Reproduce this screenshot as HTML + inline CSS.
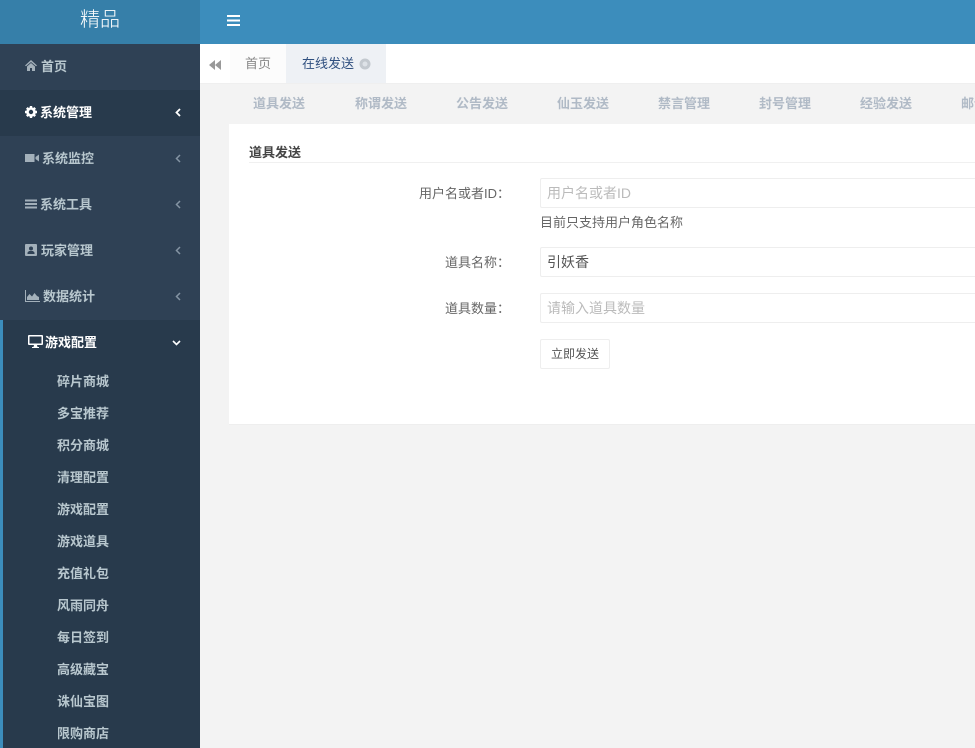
<!DOCTYPE html>
<html lang="zh">
<head>
<meta charset="utf-8">
<title>在线发送</title>
<style>
html,body{margin:0;padding:0;width:975px;height:748px;overflow:hidden;background:#f3f3f3;}
body{position:relative;font-family:"Liberation Sans","Noto Sans CJK SC",sans-serif;font-size:14px;color:#666;}
.a{position:absolute;white-space:nowrap;}
#logo{left:0;top:0;width:200px;height:44px;background:#367fa9;color:#fff;font-size:20px;line-height:40px;text-align:center;font-weight:300;}
#top{left:200px;top:0;width:775px;height:44px;background:#3c8dbc;}
#side{left:0;top:44px;width:200px;height:704px;background:#2f4155;overflow:hidden;}
.it{position:absolute;left:0;width:200px;height:46px;line-height:46px;color:#b8c7ce;font-size:13px;font-weight:bold;}
.it span{position:absolute;top:0;}
.it svg{position:absolute;}
.act{background:#283a4c;color:#fff;}
.chev{position:absolute;left:175px;top:18px;}
#open{position:absolute;left:0;top:276px;width:200px;height:428px;background:#283a4c;}
#open i{position:absolute;left:0;top:0;width:3px;height:428px;background:#3c8dbc;}
.sub{position:absolute;left:57px;color:#b8c7ce;font-size:13px;font-weight:bold;line-height:34px;white-space:nowrap;}
#tabs{left:200px;top:44px;width:775px;height:39px;background:#fff;border-bottom:1px solid #efefef;}
#tabs .home{position:absolute;left:30px;top:0;width:56px;height:39px;background:#fcfcfc;text-align:center;line-height:40px;font-size:13px;color:#888;}
#tabs .cur{position:absolute;left:86px;top:0;width:100px;height:39px;background:#eef1f5;}
#nav{left:200px;top:84px;width:775px;height:40px;}
#nav span{position:absolute;top:10px;font-size:13px;font-weight:bold;color:#b0bac6;line-height:19px;white-space:nowrap;}
#card{left:229px;top:124px;width:746px;height:300px;background:#fff;border-bottom:1px solid #eee;}
.lab{position:absolute;right:465px;text-align:right;font-size:13px;color:#666;line-height:20px;white-space:nowrap;}
.inp{position:absolute;left:311px;width:445px;height:28px;border:1px solid #eee;border-right:0;border-radius:2px 0 0 2px;background:#fff;font-size:14px;line-height:28px;padding-left:6px;box-sizing:content-box;color:#bbb;white-space:nowrap;}
</style>
</head>
<body>
<div class="a" id="logo">精品</div>
<div class="a" id="top">
<svg style="position:absolute;left:27px;top:15px" width="13" height="11" viewBox="0 0 13 11"><path d="M0 0h13v2H0zM0 4.500h13v2H0zM0 9h13v2H0z" fill="#fff"/></svg>
</div>
<div class="a" id="side">
<div class="it" style="top:0"><svg style="left:25px;top:16px" width="12" height="11" viewBox="0 0 12 11"><path d="M6 0L0 5.500l1 .8L6 2l5 4.300 1-.8zM2 6.500V11h3V8h2v3h3V6.500L6 3z" fill="#a3b0ba"/></svg><span style="left:41px">首页</span></div>
<div class="it act" style="top:46px"><svg style="left:25px;top:16px" width="12" height="12" viewBox="0 0 12 12"><circle cx="6" cy="6" r="3.500" fill="none" stroke="#fff" stroke-width="2.600"/><path d="M4.800 0h2.400v2H4.800zM4.800 10h2.400v2H4.800zM0 4.800h2v2.400H0zM10 4.800h2v2.400h-2zM1 2.700L2.700 1l1.400 1.400-1.700 1.700zM8 9.600l1.700-1.700L11 9.300 9.300 11zM1 9.300l1.400-1.400 1.700 1.700L2.700 11zM7.900 2.400L9.300 1 11 2.700 9.600 4.100z" fill="#fff"/></svg><span style="left:40px">系统管理</span><svg class="chev" width="6" height="9" viewBox="0 0 6 9"><path d="M5 1L1.500 4.500 5 8" fill="none" stroke="#fff" stroke-width="1.800"/></svg></div>
<div class="it" style="top:92px"><svg style="left:25px;top:17px" width="14" height="10" viewBox="0 0 14 10"><path d="M0 1h9.500v8H0zM10.500 4L14 1.500v7L10.500 6z" fill="#a3b0ba"/></svg><span style="left:42px">系统监控</span><svg class="chev" width="6" height="9" viewBox="0 0 6 9"><path d="M5 1L1.500 4.500 5 8" fill="none" stroke="#8494a3" stroke-width="1.500"/></svg></div>
<div class="it" style="top:138px"><svg style="left:25px;top:17px" width="12" height="10" viewBox="0 0 12 10"><path d="M0 .5h12v2H0zM0 4h12v2H0zM0 7.500h12v2H0z" fill="#a3b0ba"/></svg><span style="left:40px">系统工具</span><svg class="chev" width="6" height="9" viewBox="0 0 6 9"><path d="M5 1L1.500 4.500 5 8" fill="none" stroke="#8494a3" stroke-width="1.500"/></svg></div>
<div class="it" style="top:184px"><svg style="left:25px;top:16px" width="12" height="12" viewBox="0 0 12 12"><path fill-rule="evenodd" d="M1 0h10a1 1 0 0 1 1 1v10a1 1 0 0 1-1 1H1a1 1 0 0 1-1-1V1a1 1 0 0 1 1-1zM6 2.500a2 2 0 1 0 0 4 2 2 0 0 0 0-4zM2.500 10h7V8.500L8 7H4L2.500 8.500z" fill="#a3b0ba"/></svg><span style="left:41px">玩家管理</span><svg class="chev" width="6" height="9" viewBox="0 0 6 9"><path d="M5 1L1.500 4.500 5 8" fill="none" stroke="#8494a3" stroke-width="1.500"/></svg></div>
<div class="it" style="top:230px"><svg style="left:25px;top:16px" width="15" height="12" viewBox="0 0 15 12"><path d="M0 0h1v11h14v1H0zM2 10V7l2.500-3L7 6.500 9.500 3 12 6l2 1v3z" fill="#a3b0ba"/></svg><span style="left:43px">数据统计</span><svg class="chev" width="6" height="9" viewBox="0 0 6 9"><path d="M5 1L1.500 4.500 5 8" fill="none" stroke="#8494a3" stroke-width="1.500"/></svg></div>
<div id="open"><i></i>
<div class="it" style="top:0;color:#fff"><svg style="left:28px;top:15px" width="15" height="13" viewBox="0 0 15 13"><path fill-rule="evenodd" d="M1 0h13a1 1 0 0 1 1 1v8a1 1 0 0 1-1 1H9l.5 2H11v1H4v-1h1.500L6 10H1a1 1 0 0 1-1-1V1a1 1 0 0 1 1-1zM1.500 1.500v7h12v-7z" fill="#fff"/></svg><span style="left:45px">游戏配置</span><svg style="left:172px;top:20px" width="9" height="6" viewBox="0 0 9 6"><path d="M1 1l3.500 3.500L8 1" fill="none" stroke="#fff" stroke-width="1.600"/></svg></div>
<div class="sub" style="top:45px">碎片商城</div>
<div class="sub" style="top:77px">多宝推荐</div>
<div class="sub" style="top:109px">积分商城</div>
<div class="sub" style="top:141px">清理配置</div>
<div class="sub" style="top:173px">游戏配置</div>
<div class="sub" style="top:205px">游戏道具</div>
<div class="sub" style="top:237px">充值礼包</div>
<div class="sub" style="top:269px">风雨同舟</div>
<div class="sub" style="top:301px">每日签到</div>
<div class="sub" style="top:333px">高级藏宝</div>
<div class="sub" style="top:365px">诛仙宝图</div>
<div class="sub" style="top:397px">限购商店</div>
</div>
</div>
<div class="a" id="tabs">
<svg style="position:absolute;left:9px;top:16px" width="12" height="10" viewBox="0 0 12 10"><path d="M6 0v10L0 5zM12 0v10L6 5z" fill="#999"/></svg>
<div class="home">首页</div>
<div class="cur">
<span style="position:absolute;left:16px;top:0;line-height:40px;font-size:13px;color:#2f4f7f">在线发送</span>
<svg style="position:absolute;left:73px;top:14px" width="12" height="12" viewBox="0 0 12 12"><circle cx="6" cy="6" r="5.500" fill="#c3c9cf"/><circle cx="6" cy="6" r="2.500" fill="#dde2e7"/></svg>
</div>
</div>
<div class="a" id="nav">
<span style="left:53px">道具发送</span>
<span style="left:155px">称谓发送</span>
<span style="left:256px">公告发送</span>
<span style="left:357px">仙玉发送</span>
<span style="left:458px">禁言管理</span>
<span style="left:559px">封号管理</span>
<span style="left:660px">经验发送</span>
<span style="left:761px">邮件发送</span>
</div>
<div class="a" id="card">
<div class="a" style="left:20px;top:19px;font-size:13px;line-height:20px;color:#444;font-weight:bold">道具发送</div>
<div class="a" style="left:20px;top:38px;width:726px;height:1px;background:#f0f0f0"></div>
<div class="lab" style="top:60px">用户名或者ID：</div>
<div class="inp" style="top:54px">用户名或者ID</div>
<div class="a" style="left:311px;top:89px;font-size:13px;line-height:20px;color:#666">目前只支持用户角色名称</div>
<div class="lab" style="top:129px">道具名称：</div>
<div class="inp" style="top:123px;color:#555">引妖香</div>
<div class="lab" style="top:175px">道具数量：</div>
<div class="inp" style="top:169px;line-height:29px">请输入道具数量</div>
<div class="a" style="left:311px;top:215px;width:68px;height:28px;border:1px solid #eee;border-radius:2px;text-align:center;line-height:28px;font-size:12px;color:#555;background:#fff">立即发送</div>
</div>
</body>
</html>
